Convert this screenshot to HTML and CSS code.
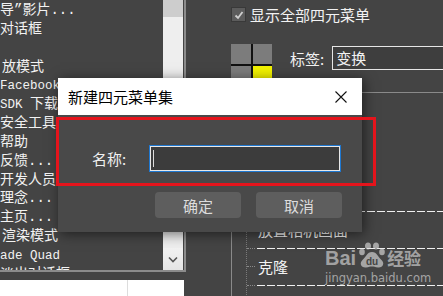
FILE: index.html
```html
<!DOCTYPE html>
<html lang="zh">
<head>
    <meta charset="UTF-8">
    <title>新建四元菜单集</title>
    <link rel="stylesheet" href="styles.css">
</head>
<body>
    <div class="page">
        <!-- Colonne gauche : liste d'actions -->
        <div class="left">
            <div class="list-box">
                <div class="list">
                    <div class="row">导”影片...</div>
                    <div class="row">对话框</div>
                    <div class="row"></div>
                    <div class="row in">放模式</div>
                    <div class="row"><span class="lat">Facebook</span></div>
                    <div class="row"><span class="lat">SDK </span>下载</div>
                    <div class="row">安全工具</div>
                    <div class="row">帮助</div>
                    <div class="row">反馈...</div>
                    <div class="row">开发人员</div>
                    <div class="row">理念...</div>
                    <div class="row">主页...</div>
                    <div class="row in">渲染模式</div>
                    <div class="row"><span class="lat">ade Quad</span></div>
                    <div class="row">淡出对话框</div>
                </div>
                <div class="scrollbar">
                    <div class="thumb"></div>
                    <div class="track"></div>
                    <div class="scroll-btn">
                        <svg width="10" height="7" viewBox="0 0 10 7"><path d="M1 1.5 L5 5.5 L9 1.5" fill="none" stroke="#555" stroke-width="1.6"/></svg>
                    </div>
                </div>
            </div>
            <div class="white-box"><div class="col-line"></div></div>
        </div>

        <!-- Colonne droite : options du menu quad -->
        <div class="right">
            <div class="check-row">
                <span class="checkbox">
                    <svg width="12" height="12" viewBox="0 0 12 12"><path d="M2.5 6.5 L5 9 L9.5 3" fill="none" stroke="#cfcfcf" stroke-width="1.8"/></svg>
                </span>
                <span>显示全部四元菜单</span>
            </div>
            <div class="label-row">
                <div class="quad">
                    <div class="cell"></div>
                    <div class="cell"></div>
                    <div class="cell"></div>
                    <div class="cell on"></div>
                </div>
                <span class="tag-label">标签:</span>
                <div class="tag-input">变换</div>
            </div>
            <div class="hline"></div>
            <div class="tree">
                <div class="tree-inner">
                    <div class="node"><span class="conn"></span></div>
                    <div class="node"><span class="conn"></span><span class="dash"></span></div>
                    <div class="node"><span class="conn"></span><span class="node-text">放置相机画面</span></div>
                    <div class="node"><span class="conn"></span><span class="dash"></span></div>
                    <div class="node"><span class="conn"></span><span class="node-text">克隆</span></div>
                    <div class="node"><span class="conn"></span><span class="dash"></span></div>
                    <div class="node"><span class="conn"></span><span class="node-text">属性</span></div>
                </div>
            </div>
        </div>

        <!-- Boîte de dialogue -->
        <div class="dialog">
            <div class="dialog-title">
                <span>新建四元菜单集</span>
                <svg class="close" width="12" height="12" viewBox="0 0 12 12"><path d="M0.5 0.5 L11.5 11.5 M11.5 0.5 L0.5 11.5" stroke="#111" stroke-width="1.1"/></svg>
            </div>
            <div class="dialog-body">
                <div class="name-row">
                    <span class="name-label">名称:</span>
                    <div class="name-input"><span class="caret"></span></div>
                </div>
                <div class="buttons">
                    <button>确定</button>
                    <button>取消</button>
                </div>
            </div>
        </div>

        <div class="mark"></div>

        <div class="watermark">
            <div class="wm-logo">
                <span class="wm-bai">Bai</span>
                <svg width="30" height="28" viewBox="0 0 30 28">
                    <ellipse cx="5" cy="11" rx="2.8" ry="3.2"/>
                    <ellipse cx="11" cy="5" rx="3" ry="3.6"/>
                    <ellipse cx="19" cy="5" rx="3" ry="3.6"/>
                    <ellipse cx="25" cy="11" rx="2.8" ry="3.2"/>
                    <path d="M15 11 C10 11 9 16 5.5 19 C2 22 4 27 9 26.5 C12 26.2 13 25.6 15 25.6 C17 25.6 18 26.2 21 26.5 C26 27 28 22 24.5 19 C21 16 20 11 15 11 Z"/>
                    <text x="15" y="24" text-anchor="middle" class="wm-du">du</text>
                </svg>
                <span class="wm-jy">经验</span>
            </div>
            <div class="wm-url">jingyan.baidu.com</div>
        </div>
    </div>
</body>
</html>
```

FILE: styles.css
```css
/* Mise en page générale */
body { margin: 0; background: #444444; font-family: "Noto Sans CJK SC", sans-serif; }
.page { position: relative; display: flex; width: 443px; height: 296px; overflow: hidden; background: #444444; color: #f2f2f2; }

/* Colonne gauche */
.left { width: 186px; display: flex; flex-direction: column; flex-shrink: 0; }
.list-box { display: flex; height: 270px; flex-shrink: 0; border-right: 2px solid #8c8c8c; border-bottom: 2px solid #8c8c8c; }
.list { width: 163px; overflow: hidden; padding-top: 1px; font-family: "Liberation Mono", "Noto Sans CJK SC", monospace; font-size: 14px; }
.row { height: 18.85px; line-height: 18.85px; white-space: pre; }
.row.in { padding-left: 2px; }
.lat { font-size: 12.5px; }
.scrollbar { width: 20px; display: flex; flex-direction: column; background: #eeeeee; }
.thumb { height: 17px; background: #cdcdcd; }
.track { flex: 1; }
.scroll-btn { height: 22px; display: flex; align-items: center; justify-content: center; background: linear-gradient(#f2f2f2, #e4e4e4); }
.white-box { position: relative; margin-top: 8px; flex: 1; width: 184px; background: #ffffff; }
.col-line { position: absolute; left: 127px; top: 0; bottom: 0; width: 1px; background: #dddddd; }

/* Colonne droite */
.right { flex: 1; min-width: 0; padding-left: 45px; }
.check-row { display: flex; align-items: center; gap: 4px; margin-top: 6px; height: 17px; font-size: 15px; white-space: nowrap; }
.checkbox { width: 13px; height: 13px; display: flex; align-items: center; justify-content: center; background: #5c5c5c; border: 1px solid #393939; }
.label-row { display: flex; align-items: flex-start; margin-top: 21px; height: 42px; }
.quad { display: grid; grid-template-columns: 20px 19px; grid-template-rows: 20px 20px; gap: 2px; background: #111111; width: 41px; height: 42px; flex-shrink: 0; }
.cell { background: #7c7c7c; }
.cell.on { background: #f2f200; }
.tag-label { margin-left: 18px; margin-top: 5px; font-size: 15px; line-height: 20px; white-space: nowrap; flex-shrink: 0; }
.tag-input { margin-left: 8px; margin-top: 2px; width: 120px; height: 22px; border: 1px solid #e6e6e6; background: #3e3e3e; font-size: 15px; line-height: 21px; padding-left: 3px; flex-shrink: 0; }
.hline { margin-top: 6px; margin-left: 80px; height: 1px; background: #8a8a8a; }

/* Arbre des éléments */
.tree { margin-top: 55px; border-left: 1px solid #8a8a8a; height: 200px; }
.tree-inner { margin-left: 14px; border-left: 1px dotted #7a7a7a; padding-top: 36px; }
.node { display: flex; align-items: center; height: 18.4px; }
.conn { width: 8px; border-top: 1px dotted #8a8a8a; }
.node-text { margin-left: 3px; font-size: 15px; white-space: nowrap; }
.dash { flex: 1; margin-left: 2px; height: 1px; background: repeating-linear-gradient(90deg, #f0f0f0 0 8px, transparent 8px 10px); }

/* Boîte de dialogue */
.dialog { position: absolute; left: 58px; top: 78px; width: 304px; height: 154px; background: #494949; box-shadow: 2px 2px 12px rgba(0, 0, 0, 0.55); display: flex; flex-direction: column; }
.dialog-title { height: 37px; background: #ffffff; color: #000000; display: flex; align-items: center; justify-content: space-between; padding: 0 15px 0 10px; font-size: 15px; }
.dialog-body { flex: 1; display: flex; flex-direction: column; }
.name-row { display: flex; align-items: center; margin-top: 30px; padding-left: 34px; }
.name-label { width: 57px; font-size: 15px; color: #f0f0f0; }
.name-input { width: 187px; height: 25px; border: 1px solid #1f78d1; box-shadow: inset 0 0 0 1px #e8e8e8; background: #3c3c3c; display: flex; align-items: center; padding-left: 3px; box-sizing: content-box; }
.caret { width: 1px; height: 17px; background: #dddddd; }
.buttons { display: flex; gap: 15px; justify-content: flex-end; margin-top: 20px; padding-right: 20px; }
.buttons button { width: 86px; height: 26px; border: none; border-radius: 4px; background: #5e5e5e; color: #dcdcdc; font-family: "Noto Sans CJK SC", sans-serif; font-size: 15px; padding: 0; }

/* Cadre rouge d'annotation */
.mark { position: absolute; left: 56px; top: 117px; width: 314px; height: 63px; border: 3px solid #e5141c; }

/* Filigrane */
.watermark { position: absolute; left: 325px; top: 239px; color: rgba(225, 225, 225, 0.62); }
.wm-logo { display: flex; align-items: flex-end; height: 30px; }
.wm-bai { font-family: "Liberation Sans", sans-serif; font-weight: bold; font-size: 20px; line-height: 20px; margin-bottom: 1px; }
.wm-logo svg { fill: rgba(225, 225, 225, 0.62); margin-left: 1px; }
.wm-du { fill: #444444; font-family: "Liberation Sans", sans-serif; font-weight: bold; font-size: 10px; }
.wm-jy { font-weight: bold; font-size: 17px; line-height: 20px; margin-bottom: 1px; }
.wm-url { font-family: "DejaVu Sans", sans-serif; font-size: 11.5px; margin-top: 2px; }
```
